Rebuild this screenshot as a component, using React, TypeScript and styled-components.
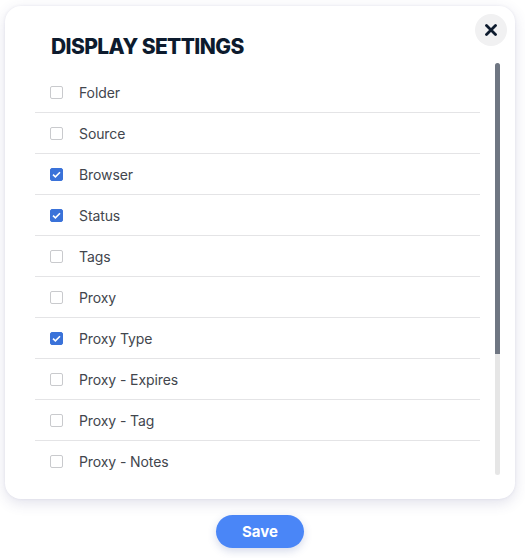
import React, { useEffect, useRef, useState } from 'react';
import styled, { createGlobalStyle } from 'styled-components';

const GlobalStyle = createGlobalStyle`
	html, body {
		margin: 0;
		padding: 0;
		background: #ffffff;
	}
	body {
		font-family: Inter, 'Liberation Sans', sans-serif;
	}
`;

const Page = styled.div`
	width: 525px;
	height: 558px;
	display: flex;
	flex-direction: column;
	align-items: flex-start;
`;

const Card = styled.div`
	position: relative;
	box-sizing: border-box;
	width: 510px;
	height: 493px;
	margin: 6px 0 0 5px;
	padding: 28px 15px 0 30px;
	background: #fff;
	border-radius: 16px;
	box-shadow: 0 4px 14px rgba(70, 70, 130, 0.16), 0 0 3px rgba(70, 70, 130, 0.08);
	display: flex;
	flex-direction: column;
`;

const Title = styled.h2`
	margin: 0 0 0 16px;
	font-family: Inter, 'Liberation Sans', sans-serif;
	font-weight: 800;
	font-size: 21px;
	line-height: 26px;
	letter-spacing: -0.6px;
	color: #0d1b2e;
`;

const CloseBtn = styled.button`
	position: absolute;
	top: 8px;
	right: 8px;
	width: 32px;
	height: 32px;
	border: none;
	border-radius: 50%;
	background: #f1f1f2;
	display: flex;
	align-items: center;
	justify-content: center;
	padding: 0;
	cursor: pointer;
`;

const ListArea = styled.div`
	margin-top: 3px;
	height: 412px;
	display: flex;
`;

const Scroller = styled.div`
	flex: 1;
	overflow-y: auto;
	padding-top: 9px;
	box-sizing: border-box;
	scrollbar-width: none;

	&::-webkit-scrollbar {
		display: none;
	}
`;

const Track = styled.div`
	width: 5px;
	flex-shrink: 0;
	background: #e6e6e6;
	border-radius: 3px;
	overflow: hidden;
`;

const Thumb = styled.div`
	width: 100%;
	background: #6f7682;
`;

const Row = styled.label`
	display: flex;
	align-items: center;
	gap: 16px;
	height: 41px;
	box-sizing: border-box;
	margin-right: 15px;
	padding-left: 15px;
	border-bottom: 1px solid #e4e4e6;
	cursor: pointer;
`;

const Box = styled.span<{ $checked: boolean }>`
	width: 13px;
	height: 13px;
	box-sizing: border-box;
	border-radius: 2px;
	border: 1px solid ${(p) => (p.$checked ? '#3a72d9' : '#c9cacd')};
	background: ${(p) => (p.$checked ? '#3a72d9' : '#fff')};
	display: flex;
	align-items: center;
	justify-content: center;
	flex-shrink: 0;
`;

const RowText = styled.span`
	font-size: 14px;
	color: #42464d;
	letter-spacing: -0.1px;
`;

const Footer = styled.div`
	width: 510px;
	margin-left: 5px;
	display: flex;
	justify-content: center;
	margin-top: 16px;
`;

const SaveBtn = styled.button`
	width: 88px;
	height: 33px;
	border: none;
	border-radius: 17px;
	background: #4a86f7;
	color: #fff;
	font-family: Inter, 'Liberation Sans', sans-serif;
	font-weight: 700;
	font-size: 15px;
	box-shadow: 0 3px 8px rgba(60, 80, 160, 0.22);
	cursor: pointer;
`;

const columns = [
	'Folder',
	'Source',
	'Browser',
	'Status',
	'Tags',
	'Proxy',
	'Proxy Type',
	'Proxy - Expires',
	'Proxy - Tag',
	'Proxy - Notes',
	'Notes',
	'Created',
	'Updated',
	'Actions',
];

const initial = ['Browser', 'Status', 'Proxy Type'];

export default function App() {
	const [checked, setChecked] = useState<string[]>(initial);
	const [thumb, setThumb] = useState({ top: 0, height: 0 });
	const scrollRef = useRef<HTMLDivElement>(null);

	const measure = () => {
		const el = scrollRef.current;
		if (!el) return;
		const ratio = el.clientHeight / el.scrollHeight;
		setThumb({
			top: el.scrollTop * ratio,
			height: Math.min(1, ratio) * el.clientHeight,
		});
	};

	useEffect(() => {
		measure();
	}, []);

	const toggle = (name: string) => {
		setChecked((c) => (c.includes(name) ? c.filter((x) => x !== name) : [...c, name]));
	};

	return (
		<Page>
			<GlobalStyle />
			<Card>
				<CloseBtn aria-label="Close">
					<svg width="12" height="12" viewBox="0 0 12 12">
						<path d="M1.5 1.5 L10.5 10.5 M10.5 1.5 L1.5 10.5" stroke="#0d1b2e" strokeWidth="2.8" strokeLinecap="round" />
					</svg>
				</CloseBtn>
				<Title>DISPLAY SETTINGS</Title>
				<ListArea>
					<Scroller ref={scrollRef} onScroll={measure}>
						{columns.map((name) => {
							const on = checked.includes(name);
							return (
								<Row key={name} onClick={() => toggle(name)}>
									<Box $checked={on}>
										{on && (
											<svg width="9" height="7" viewBox="0 0 9 7">
												<path d="M1 3.6 L3.4 5.8 L8 1.2" stroke="#fff" strokeWidth="1.6" fill="none" />
											</svg>
										)}
									</Box>
									<RowText>{name}</RowText>
								</Row>
							);
						})}
					</Scroller>
					<Track>
						<Thumb style={{ marginTop: thumb.top, height: thumb.height }} />
					</Track>
				</ListArea>
			</Card>
			<Footer>
				<SaveBtn>Save</SaveBtn>
			</Footer>
		</Page>
	);
}
